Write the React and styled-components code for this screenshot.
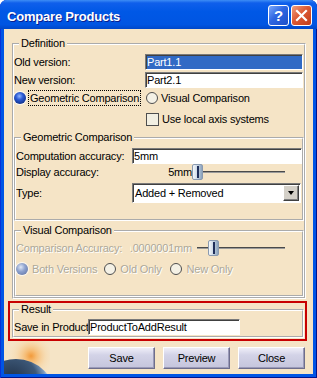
import React from 'react';
import styled, { createGlobalStyle, css } from 'styled-components';

const FONT = '"Liberation Sans", Arial, sans-serif';
const BEIGE = '#F5E4C6';

const GlobalStyle = createGlobalStyle`
  html, body {
    margin: 0;
    padding: 0;
    background: #fff;
  }
  body {
    font-family: ${FONT};
    font-size: 11px;
    letter-spacing: -0.2px;
    color: #000;
  }
`;

const Window = styled.div`
  width: 317px;
  height: 378px;
  display: flex;
  flex-direction: column;
  background: #0055e5;
  border-radius: 7px 7px 0 0;
  box-shadow: inset 1px 0 #0831d9, inset -1px 0 #00138c, inset 0 -1px #00138c;
  overflow: hidden;
`;

const TitleBar = styled.div`
  height: 29px;
  flex-shrink: 0;
  display: flex;
  align-items: flex-start;
  padding: 0 5px 0 7px;
  background: linear-gradient(#3d8df5 0, #0f5feb 3px, #0058e6 40%, #0055e2 85%, #0047c8 100%);
`;

const Title = styled.span`
  flex: 1;
  margin-top: 9px;
  line-height: 16px;
  font: bold 13px ${FONT};
  letter-spacing: -0.2px;
  color: #fff;
  text-shadow: 1px 1px 0 #0a1e8c;
`;

const CaptionButtons = styled.div`
  display: flex;
  gap: 2px;
  margin-top: 5px;
`;

const CaptionButton = styled.span`
  width: 21px;
  height: 21px;
  box-sizing: border-box;
  display: flex;
  align-items: center;
  justify-content: center;
  border: 1px solid #fff;
  border-radius: 3px;
  color: #fff;
  font: bold 15px ${FONT};
  background: ${p => p.$kind === 'close'
    ? 'linear-gradient(135deg, #f0a080 0%, #dc5a35 45%, #c23d1a 100%)'
    : 'linear-gradient(135deg, #7aa8fb 0%, #2e66e2 45%, #1d4fc8 100%)'};
`;

const Client = styled.div`
  flex: 1;
  margin: 0 4px 4px;
  padding-top: 8px;
  display: flex;
  flex-direction: column;
  background: ${BEIGE};
`;

const Group = styled.fieldset`
  margin: ${p => p.$margin || '0'};
  padding: ${p => p.$padding || '0'};
  border: 2px groove #fff;
  min-width: 0;
`;

const Caption = styled.legend`
  margin-left: 5px;
  padding: 0 2px;
  line-height: 13px;
`;

const Row = styled.div`
  display: flex;
  align-items: center;
  height: ${p => p.$h || 16}px;
  margin-top: ${p => p.$mt || 0}px;
  padding-left: ${p => p.$indent || 0}px;
`;

const disabledText = css`
  color: #aca899;
  text-shadow: 1px 1px 0 #fff;
`;

const FieldLabel = styled.span`
  width: ${p => p.$w}px;
  flex-shrink: 0;
  white-space: nowrap;
  ${p => p.$disabled && disabledText}
`;

const TextBox = styled.input`
  width: ${p => p.$w}px;
  height: 16px;
  box-sizing: border-box;
  margin: 0;
  padding: 0 0 0 1px;
  font: 11px ${FONT};
  letter-spacing: -0.2px;
  border: 1px solid;
  border-color: #7a7a7a #fff #fff #7a7a7a;
  box-shadow: inset 1px 1px 0 #404040;
  background: ${p => (p.$selected ? '#316ac5' : '#fff')};
  color: ${p => (p.$selected ? '#fff' : '#000')};
  outline: none;
`;

const Cell = styled.div`
  width: ${p => p.$w}px;
  flex-shrink: 0;
  display: flex;
  align-items: center;
`;

const Option = styled.label`
  display: flex;
  align-items: center;
  gap: ${p => p.$gap ?? 4}px;
  margin-right: ${p => p.$mr || 0}px;
  white-space: nowrap;
  ${p => p.$disabled && disabledText}
`;

const RadioDot = styled.span`
  width: 12px;
  height: 12px;
  flex-shrink: 0;
  box-sizing: border-box;
  border-radius: 50%;
  text-shadow: none;
  ${p => {
    if (p.$checked && p.$disabled) {
      return css`
        background: radial-gradient(circle at 40% 35%, #dfe7f6 0, #8fa3cf 40%, #6479ab 85%);
        box-shadow: 0 0 1px 1px rgba(255, 255, 255, 0.8);
      `;
    }
    if (p.$checked) {
      return css`
        background: radial-gradient(circle at 45% 35%, #8fb4ff 0, #2c5bd5 35%, #0b2a80 85%);
        box-shadow: 0 0 1px 1px rgba(255, 255, 255, 0.85);
      `;
    }
    return css`
      border: 1px solid #4e4e4e;
      background: #f4f1e6;
    `;
  }}
`;

const CheckSquare = styled.span`
  width: 13px;
  height: 13px;
  flex-shrink: 0;
  box-sizing: border-box;
  border: 1px solid #4e4e4e;
  background: #f2efe2;
`;

const FocusBox = styled.span`
  border: 1px dotted #000;
  padding: 0 1px;
  line-height: 14px;
`;

const ValueBox = styled.div`
  width: ${p => p.$w}px;
  flex-shrink: 0;
  display: flex;
  justify-content: flex-end;
  overflow: hidden;
  white-space: nowrap;
  ${p => p.$disabled && disabledText}
`;

const Slider = styled.div`
  position: relative;
  width: 94px;
  height: 16px;
  flex-shrink: 0;

  &::before {
    content: '';
    position: absolute;
    left: 5px;
    right: 1px;
    top: 7px;
    height: 1px;
    background: #4a4a4a;
    border-bottom: 1px solid #9a9a9a;
  }
`;

const Thumb = styled.span`
  position: absolute;
  top: 0;
  left: ${p => p.$pos}px;
  width: 11px;
  height: 16px;
  box-sizing: border-box;
  border: 1px solid #8a9ab0;
  border-radius: 2px;
  background: linear-gradient(to right, #f4f7fa 0%, #cdd9e6 45%, #8aa2bc 100%);

  &::after {
    content: '';
    position: absolute;
    left: 4px;
    top: 1px;
    bottom: 1px;
    width: 2px;
    background: #1e2e5a;
  }
`;

const Combo = styled.div`
  width: 169px;
  height: 20px;
  box-sizing: border-box;
  display: flex;
  align-items: center;
  padding: 0 1px 0 2px;
  background: #fff;
  border: 1px solid;
  border-color: #7a7a7a #fff #fff #7a7a7a;
  box-shadow: inset 1px 1px 0 #404040;
`;

const ComboText = styled.span`
  flex: 1;
`;

const DropButton = styled.span`
  width: 16px;
  height: 16px;
  box-sizing: border-box;
  display: flex;
  align-items: center;
  justify-content: center;
  background: #d4d0c8;
  border: 1px solid;
  border-color: #fff #404040 #404040 #fff;
  box-shadow: inset -1px -1px 0 #808080;

  &::after {
    content: '';
    border-top: 4px solid #000;
    border-left: 3.5px solid transparent;
    border-right: 3.5px solid transparent;
  }
`;

const Highlight = styled.div`
  margin: 2px 6px 0 4px;
  padding: 0 1px 1px 2px;
  border: 2px solid #c80000;
`;

const ButtonRow = styled.div`
  flex: 1;
  display: flex;
  align-items: flex-start;
  gap: 8px;
  padding-right: 8px;
`;

const Globe = styled.svg`
  align-self: flex-end;
  margin-right: auto;
  display: block;
`;

const DialogButton = styled.button`
  width: 67px;
  height: 22px;
  margin-top: 6px;
  padding: 0;
  font: 11px ${FONT};
  letter-spacing: -0.2px;
  color: #000;
  background: linear-gradient(#efeef8 0%, #d3d3e7 35%, #c5c5dc 100%);
  border: 1px solid;
  border-color: #fff #6e6e8c #6e6e8c #fff;
  box-shadow: inset -1px -1px 0 #9a9ab8;
`;

function Radio({ checked, disabled, children, focus, gap, mr }) {
  return (
    <Option $disabled={disabled} $gap={gap} $mr={mr}>
      <RadioDot $checked={checked} $disabled={disabled} />
      {focus ? <FocusBox>{children}</FocusBox> : children}
    </Option>
  );
}

export default function App() {
  return (
    <>
      <GlobalStyle />
      <Window>
        <TitleBar>
          <Title>Compare Products</Title>
          <CaptionButtons>
            <CaptionButton>?</CaptionButton>
            <CaptionButton $kind="close">
              <svg width="13" height="13" viewBox="0 0 13 13">
                <path d="M2 2 L11 11 M11 2 L2 11" stroke="#fff" strokeWidth="2.2" strokeLinecap="square" />
              </svg>
            </CaptionButton>
          </CaptionButtons>
        </TitleBar>

        <Client>
          <Group $margin="0 7px 0 8px" $padding="4px 0 0 0">
            <Caption>Definition</Caption>
            <Row>
              <FieldLabel $w={131}>Old version:</FieldLabel>
              <TextBox $w={158} $selected readOnly defaultValue="Part1.1" />
            </Row>
            <Row $mt={2}>
              <FieldLabel $w={131}>New version:</FieldLabel>
              <TextBox $w={158} readOnly defaultValue="Part2.1" />
            </Row>
            <Row $mt={2}>
              <Cell $w={132}>
                <Radio checked focus gap={2}>Geometric Comparison</Radio>
              </Cell>
              <Radio gap={3}>Visual Comparison</Radio>
            </Row>
            <Row $mt={4} $h={18} $indent={132}>
              <Option $gap={3}>
                <CheckSquare />
                Use local axis systems
              </Option>
            </Row>

            <Group $margin="3px 0 0 0" $padding="4px 0 16px 0">
              <Caption>Geometric Comparison</Caption>
              <Row>
                <FieldLabel $w={116}>Computation accuracy:</FieldLabel>
                <TextBox $w={170} readOnly defaultValue="5mm" />
              </Row>
              <Row>
                <FieldLabel $w={116}>Display accuracy:</FieldLabel>
                <ValueBox $w={60}><span>5mm</span></ValueBox>
                <Slider>
                  <Thumb $pos={0} />
                </Slider>
              </Row>
              <Row $mt={3} $h={20}>
                <FieldLabel $w={116}>Type:</FieldLabel>
                <Combo>
                  <ComboText>Added + Removed</ComboText>
                  <DropButton />
                </Combo>
              </Row>
            </Group>

            <Group $margin="3px 0 0 0" $padding="3px 0 18px 0">
              <Caption>Visual Comparison</Caption>
              <Row>
                <FieldLabel $w={114} $disabled>Comparison Accuracy:</FieldLabel>
                <ValueBox $w={62} $disabled><span>0.0000001mm</span></ValueBox>
                <Slider>
                  <Thumb $pos={16} />
                </Slider>
              </Row>
              <Row $mt={5}>
                <Radio checked disabled mr={7}>Both Versions</Radio>
                <Radio disabled mr={9}>Old Only</Radio>
                <Radio disabled>New Only</Radio>
              </Row>
            </Group>
          </Group>

          <Highlight>
            <Group $padding="3px 0 1px 0">
              <Caption>Result</Caption>
              <Row>
                <FieldLabel $w={74}>Save in Product</FieldLabel>
                <TextBox $w={152} readOnly defaultValue="ProductToAddResult" />
              </Row>
            </Group>
          </Highlight>

          <ButtonRow>
            <Globe width="46" height="33" viewBox="0 0 46 33">
              <defs>
                <radialGradient id="glow" cx="27" cy="15" r="24" gradientUnits="userSpaceOnUse">
                  <stop offset="0" stopColor="#f29a3a" />
                  <stop offset="0.22" stopColor="#f6bb72" />
                  <stop offset="0.6" stopColor="#f7d6a6" stopOpacity="0.6" />
                  <stop offset="1" stopColor={BEIGE} stopOpacity="0" />
                </radialGradient>
                <radialGradient id="planet" cx="8" cy="40" r="36" gradientUnits="userSpaceOnUse">
                  <stop offset="0" stopColor="#1f2f45" />
                  <stop offset="0.7" stopColor="#3d5878" />
                  <stop offset="0.92" stopColor="#7d9cc0" />
                  <stop offset="1" stopColor="#b8cce0" />
                </radialGradient>
              </defs>
              <rect x="0" y="0" width="46" height="33" fill="url(#glow)" />
              <circle cx="12" cy="58" r="40" fill="url(#planet)" />
            </Globe>
            <DialogButton>Save</DialogButton>
            <DialogButton>Preview</DialogButton>
            <DialogButton>Close</DialogButton>
          </ButtonRow>
        </Client>
      </Window>
    </>
  );
}
